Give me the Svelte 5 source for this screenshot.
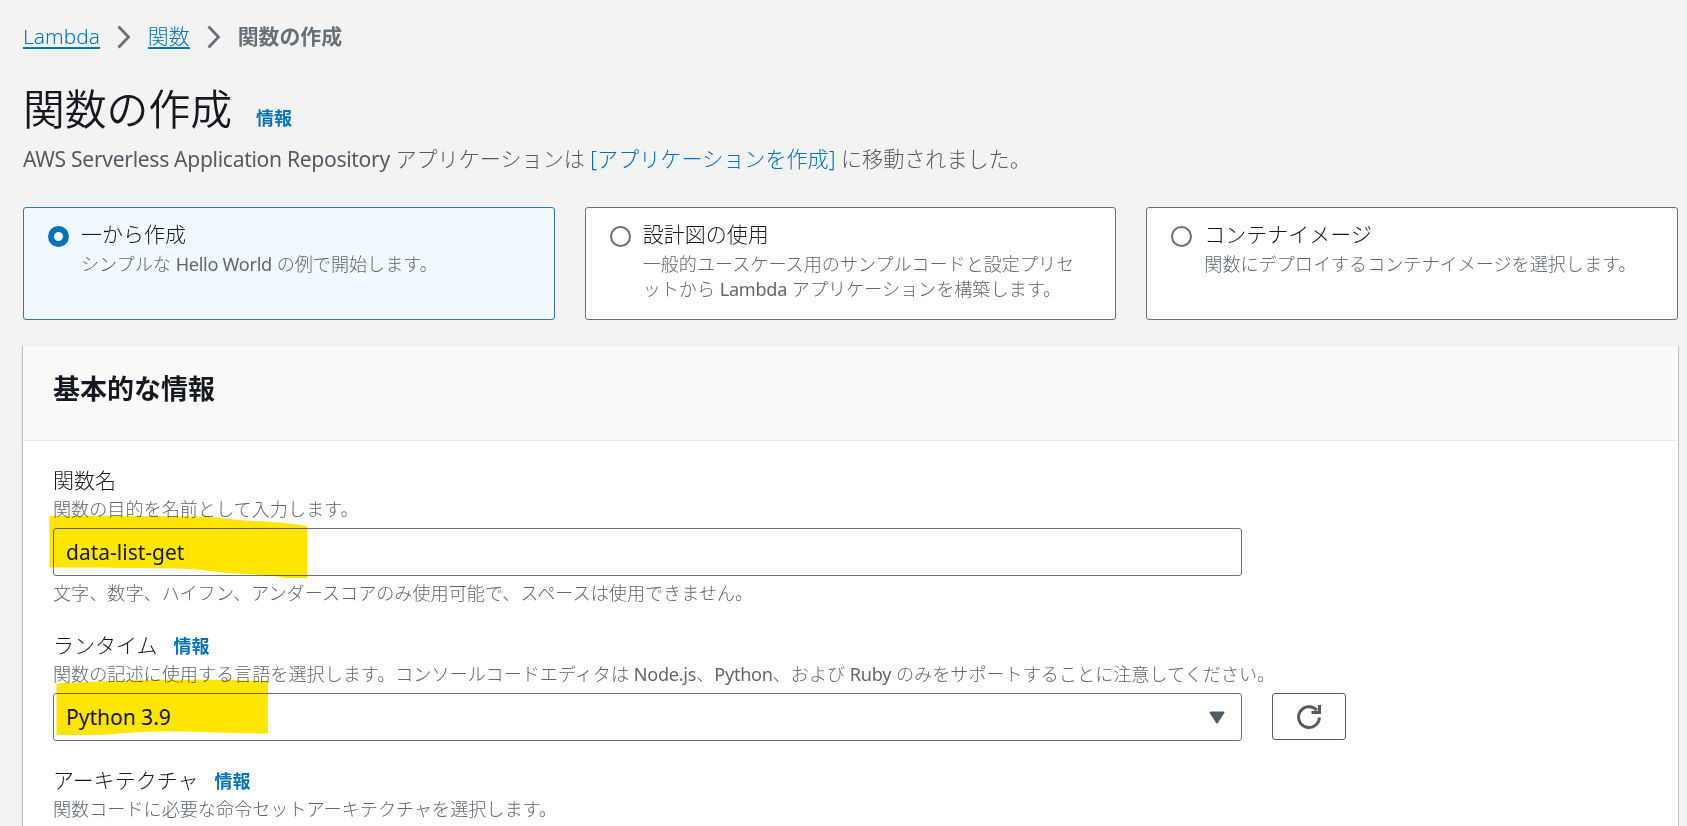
<script lang="ts">
	const crumbs = ['Lambda', '関数'];

	const methods = [
		{ id: 'scratch', title: '一から作成', hint: ['シンプルな ', 'Hello World', ' の例で開始します。'] },
		{
			id: 'blueprint',
			title: '設計図の使用',
			hint: [
				'一般的ユースケース用のサンプルコードと設定プリセットから ',
				'Lambda',
				' アプリケーションを構築します。'
			]
		},
		{
			id: 'container',
			title: 'コンテナイメージ',
			hint: ['関数にデプロイするコンテナイメージを選択します。']
		}
	];

	let selected = $state('scratch');
	let functionName = $state('data-list-get');
	let runtime = $state('Python 3.9');
</script>

<main>
	<nav>
		{#each crumbs as crumb}
			<a href="#top">{crumb}</a>
			<svg class="chevron" viewBox="0 0 14 24">
				<path d="M1.5 1.5L11.5 12L1.5 22.5" />
			</svg>
		{/each}
		<strong>関数の作成</strong>
	</nav>

	<div class="title">
		<h1>関数の作成</h1>
		<a class="info" href="#info">情報</a>
	</div>
	<p class="lead">
		<span class="latin">AWS Serverless Application Repository</span> アプリケーションは
		<a href="#app">[アプリケーションを作成]</a> に移動されました。
	</p>

	<div class="cards">
		{#each methods as method}
			<button
				type="button"
				class="card"
				class:selected={selected === method.id}
				onclick={() => (selected = method.id)}
			>
				<span class="radio"></span>
				<span class="card-text">
					<span class="card-title">{method.title}</span>
					<span class="card-hint">
						{#each method.hint as part, i}{#if i === 1}<span class="latin">{part}</span
								>{:else}{part}{/if}{/each}
					</span>
				</span>
			</button>
		{/each}
	</div>

	<section>
		<header>
			<h2>基本的な情報</h2>
		</header>
		<div class="body">
			<div class="field name">
				<label for="name">関数名</label>
				<p class="hint">関数の目的を名前として入力します。</p>
				<div class="control">
					<input id="name" type="text" bind:value={functionName} />
					<svg class="marker marker-name" viewBox="0 0 260 64">
						<path
							d="M0.5 1Q90 0.5 152 1.5C175 2.5 182 5 205 6C232 7 245 9 258.5 11V63H238C222 60 204 59.5 186 58.5C165 57.5 150 53.5 130 53.5C80 53 40 52.5 0.5 52.5Z"
						/>
					</svg>
				</div>
				<p class="hint foot">
					文字、数字、ハイフン、アンダースコアのみ使用可能で、スペースは使用できません。
				</p>
			</div>

			<div class="field">
				<div class="label-row">
					<span class="label">ランタイム</span>
					<a class="info" href="#info">情報</a>
				</div>
				<p class="hint">
					関数の記述に使用する言語を選択します。コンソールコードエディタは <span class="latin"
						>Node.js</span
					>、<span class="latin">Python</span>、および <span class="latin">Ruby</span> のみをサポートすることに注意してください。
				</p>
				<div class="row">
					<div class="control">
						<button type="button" class="select">
							<span>{runtime}</span>
							<svg class="caret" viewBox="0 0 16 13">
								<path d="M1.5 1.5H14.5L8 11.5Z" />
							</svg>
						</button>
						<svg class="marker marker-runtime" viewBox="0 0 213 58">
							<path
								d="M0.5 4.5C35 2.5 60 1.5 90 1C140 0.5 180 1 212 2V54.5C180 54.5 150 52.5 110 52.5C70 52.5 60 56 35 56H0.5Z"
							/>
						</svg>
					</div>
					<button type="button" class="refresh" aria-label="更新">
						<svg viewBox="0 0 26 26">
							<path d="M23.4 13.5A10.4 10.4 0 1 1 20.8 6.2" />
							<path d="M23.5 1V8.5H15.5" />
						</svg>
					</button>
				</div>
			</div>

			<div class="field">
				<div class="label-row">
					<span class="label">アーキテクチャ</span>
					<a class="info" href="#info">情報</a>
				</div>
				<p class="hint">関数コードに必要な命令セットアーキテクチャを選択します。</p>
			</div>
		</div>
	</section>
</main>

<style>
	:global(body) {
		margin: 0;
		background: #f3f3f3;
	}

	main {
		box-sizing: border-box;
		height: 826px;
		overflow: hidden;
		padding: 21px 9px 0 23px;
		font-family: 'Noto Sans', 'Noto Sans CJK JP', sans-serif;
		font-size: 21px;
		line-height: 30px;
		font-weight: 300;
		color: #16191f;
	}

	h1,
	h2,
	p {
		margin: 0;
	}

	a {
		color: #0073bb;
		text-decoration: none;
	}

	button,
	input {
		font: inherit;
		color: inherit;
	}

	.latin {
		font-weight: 400;
		letter-spacing: -0.015em;
	}

	nav {
		display: flex;
		align-items: center;
		height: 30px;
		font-size: 20.9px;
	}

	nav a {
		line-height: 22px;
		border-bottom: 2px solid #0073bb;
		margin-top: 2px;
	}

	nav strong {
		margin-top: -1px;
		color: #687078;
		font-weight: 700;
	}

	.chevron {
		width: 14px;
		height: 24px;
		margin: 2px 17px 0;
		fill: none;
		stroke: #687078;
		stroke-width: 2.8;
	}

	.title {
		display: flex;
		align-items: baseline;
		gap: 24px;
		margin-top: 33px;
		height: 50px;
	}

	h1 {
		font-size: 41.8px;
		line-height: 50px;
		font-weight: 350;
	}

	.info {
		font-size: 18px;
		font-weight: 700;
	}

	.lead {
		margin-top: 10px;
		font-size: 21.1px;
		color: #545b64;
		white-space: nowrap;
	}

	.cards {
		display: grid;
		grid-template-columns: repeat(3, 1fr);
		gap: 30px;
		margin-top: 33px;
	}

	.card {
		box-sizing: border-box;
		display: flex;
		align-items: flex-start;
		height: 113px;
		padding: 11px 32px 0 24px;
		border: 1px solid #687078;
		border-radius: 3px;
		background: #fff;
		text-align: left;
	}

	.card.selected {
		border-color: #3b74ac;
		background: #f1faff;
	}

	.radio {
		box-sizing: border-box;
		flex: none;
		width: 21px;
		height: 21px;
		margin: 7px 12px 0 0;
		border: 2px solid #687078;
		border-radius: 50%;
		background: #fff;
	}

	.selected .radio {
		border: 6px solid #0073bb;
	}

	.card-title,
	.card-hint {
		display: block;
	}

	.card-hint {
		margin-top: 3px;
		font-size: 18.1px;
		line-height: 24.5px;
		color: #5f676f;
	}

	section {
		margin-top: 25px;
		height: 520px;
		background: #fff;
		box-shadow:
			0 1px 1px 0 rgba(0, 28, 36, 0.3),
			1px 1px 1px 0 rgba(0, 28, 36, 0.15),
			-1px 1px 1px 0 rgba(0, 28, 36, 0.2);
	}

	header {
		height: 96px;
		border-top: 1px solid #eaeded;
		border-bottom: 1px solid #eaeded;
		padding: 25px 30px 0;
		box-sizing: border-box;
		background: #fafafa;
	}

	h2 {
		font-size: 27px;
		line-height: 36px;
		font-weight: 700;
	}

	.body {
		padding: 24px 30px 0;
	}

	.field {
		margin-bottom: 24px;
	}

	.field.name {
		margin-bottom: 25px;
	}

	label {
		display: block;
	}

	.label-row {
		display: flex;
		align-items: baseline;
		gap: 16px;
		height: 30px;
	}

	.hint {
		margin-top: 2px;
		font-size: 18.13px;
		line-height: 24px;
		color: #5f676f;
		white-space: nowrap;
	}

	.foot {
		margin-top: 5px;
	}

	.row {
		display: flex;
		gap: 30px;
	}

	.control {
		position: relative;
		width: 1189px;
		height: 48px;
		margin-top: 7px;
	}

	input,
	.select {
		box-sizing: border-box;
		width: 100%;
		height: 48px;
		padding: 0 16px 0 12px;
		border: 1px solid #687078;
		border-radius: 3px;
		background: #fff;
		font-weight: 400;
	}

	.select {
		display: flex;
		align-items: center;
		justify-content: space-between;
	}

	.caret {
		width: 16px;
		height: 13px;
		fill: #545b64;
		stroke: #545b64;
		stroke-width: 2;
		stroke-linejoin: round;
	}

	.refresh {
		box-sizing: border-box;
		display: flex;
		align-items: center;
		justify-content: center;
		width: 74px;
		height: 47px;
		margin-top: 7px;
		padding: 0;
		border: 1px solid #545b64;
		border-radius: 3px;
		background: #fff;
	}

	.refresh svg {
		width: 26px;
		height: 26px;
		fill: none;
		stroke: #545b64;
		stroke-width: 3;
	}

	/* highlighter strokes over the entered values */
	.marker {
		position: absolute;
		fill: #ffe600;
		mix-blend-mode: multiply;
		pointer-events: none;
	}

	.marker-name {
		left: -4px;
		top: -13px;
		width: 260px;
		height: 64px;
	}

	.marker-runtime {
		left: 3px;
		top: -14px;
		width: 213px;
		height: 58px;
	}
</style>
